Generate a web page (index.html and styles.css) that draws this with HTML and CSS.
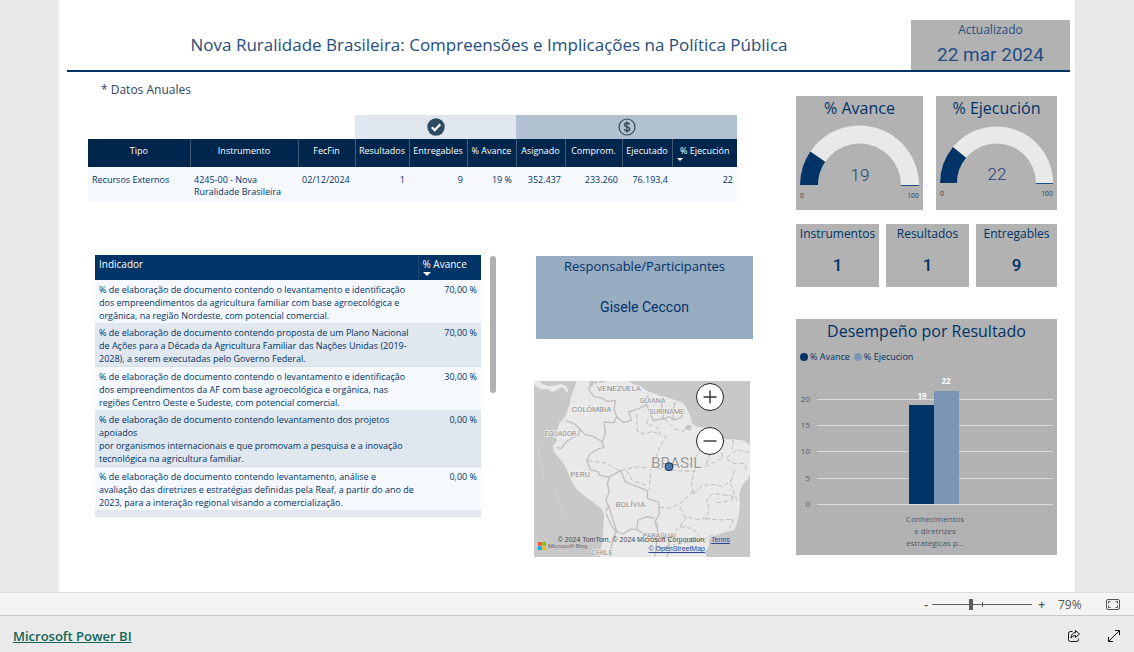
FILE: index.html
```html
<!DOCTYPE html>
<html lang="es">
<head>
<meta charset="utf-8">
<title>Nova Ruralidade Brasileira</title>
<link rel="stylesheet" href="styles.css">
</head>
<body>
<main class="stage">
  <div class="report">
    <header class="report-header">
      <h1 class="report-title">Nova Ruralidade Brasileira: Compreensões e Implicações na Política Pública</h1>
      <div class="updated">
        <span class="updated-label">Actualizado</span>
        <span class="updated-date">22 mar 2024</span>
      </div>
    </header>

    <div class="dashboard">
      <div class="left">
        <p class="note">* Datos Anuales</p>
        <table class="summary">
          <colgroup>
            <col class="c102"><col class="c108"><col class="c57"><col class="c54"><col class="c58">
            <col class="c49"><col class="c49"><col class="c57"><col class="c50"><col class="c65">
          </colgroup>
          <thead>
            <tr class="bands">
              <td colspan="3"></td>
              <td colspan="3" class="band-progress">
                <svg class="band-icon" viewBox="0 0 18 18" aria-hidden="true"><circle cx="9" cy="9" r="8.7" fill="#2c4a62"/><path d="M4.8 9.3l2.9 2.9 5.6-5.9" fill="none" stroke="#fff" stroke-width="2.2"/></svg>
              </td>
              <td colspan="4" class="band-money">
                <svg class="band-icon" viewBox="0 0 18 18" aria-hidden="true"><circle cx="9" cy="9" r="8" fill="none" stroke="#34495a" stroke-width="1.2"/><path d="M11.6 6.6C11.2 5.4 10.2 5 9 5 7.500 5 6.500 5.700 6.500 6.900c0 2.800 5.200 1.300 5.200 4.100 0 1.300-1.200 2-2.700 2-1.500 0-2.500-.6-2.800-1.900M9 3.400v11.200" fill="none" stroke="#34495a" stroke-width="1.4"/></svg>
              </td>
            </tr>
            <tr class="heads">
              <th>Tipo</th><th>Instrumento</th><th>FecFin</th><th>Resultados</th><th>Entregables</th>
              <th>% Avance</th><th>Asignado</th><th>Comprom.</th><th>Ejecutado</th>
              <th class="sorted">% Ejecución</th>
            </tr>
          </thead>
          <tbody>
            <tr>
              <td>Recursos Externos</td><td>4245-00 - Nova Ruralidade Brasileira</td><td>02/12/2024</td>
              <td class="num">1</td><td class="num">9</td><td class="num">19 %</td><td class="num">352.437</td>
              <td class="num">233.260</td><td class="num">76.193,4</td><td class="num">22</td>
            </tr>
          </tbody>
        </table>

        <div class="lower">
          <div class="indicator-panel">
            <div class="indicator-view">
              <table class="indicators">
                <thead><tr><th>Indicador</th><th class="pct sorted">% Avance</th></tr></thead>
                <tbody>
                  <tr><td>% de elaboração de documento contendo o levantamento e identificação<br>dos empreendimentos da agricultura familiar com base agroecológica e<br>orgânica, na região Nordeste, com potencial comercial.</td><td class="num">70,00 %</td></tr>
                  <tr><td>% de elaboração de documento contendo proposta de um Plano Nacional<br>de Ações para a Década da Agricultura Familiar das Nações Unidas (2019-<br>2028), a serem executadas pelo Governo Federal.</td><td class="num">70,00 %</td></tr>
                  <tr><td>% de elaboração de documento contendo o levantamento e identificação<br>dos empreendimentos da AF com base agroecológica e orgânica, nas<br>regiões Centro Oeste e Sudeste, com potencial comercial.</td><td class="num">30,00 %</td></tr>
                  <tr><td>% de elaboração de documento contendo levantamento dos projetos<br>apoiados<br>por organismos internacionais e que promovam a pesquisa e a inovação<br>tecnológica na agricultura familiar.</td><td class="num">0,00 %</td></tr>
                  <tr><td>% de elaboração de documento contendo levantamento, análise e<br>avaliação das diretrizes e estratégias definidas pela Reaf, a partir do ano de<br>2023, para a interação regional visando a comercialização.</td><td class="num">0,00 %</td></tr>
                </tbody>
              </table>
            </div>
            <div class="scroll-thumb"></div>
          </div>

          <div class="middle">
            <section class="owner">
              <h2 class="owner-label">Responsable/Participantes</h2>
              <p class="owner-name">Gisele Ceccon</p>
            </section>
            <section class="map" aria-label="Mapa">
              <svg class="map-art" viewBox="42 33 648 528" preserveAspectRatio="xMidYMid slice">
                <rect x="42" y="33" width="648" height="528" fill="#c8c8c8"/>
                <path fill="#e9e9e9" d="M42 33L58 33 66 42 88 49 108 46 122 42 138 48 146 60 140 70 134 56 122 52 108 62 96 66 82 56 62 58 42 44zM170 33L164 52 158 66 152 84 150 100 142 120 136 138 128 150 118 158 114 176 104 196 112 212 98 228 102 246 116 262 132 282 146 312 158 340 172 360 200 382 226 402 246 418 252 436 250 470 248 510 242 540 240 561L560 561 556 545 566 530 568 508 590 494 618 486 642 480 650 462 656 438 660 402 658 370 666 346 684 326 690 312 690 226 672 212 640 208 614 208 590 194 570 186 554 172 530 170 516 160 512 140 498 112 488 98 464 90 440 82 420 78 402 70 380 64 366 50 350 46 336 42 330 33 262 33 240 40 232 33 220 33 216 50 206 44 210 33z"/>
                <path fill="#c8c8c8" d="M206 33L214 52 222 40 232 44 230 33zM492 176l10-12 16 4-8 14z"/>
                <path fill="#e9e9e9" d="M372 60l12 2-2 14-10 0zM470 158l14-6 10 10-8 10-14-2z"/>
                <g fill="none" stroke="#c2bebe" stroke-width="4" stroke-linejoin="round">
                  <path d="M216 37L206 58 222 80 246 84 262 94 286 92 282 118 290 140 282 158 252 156 256 190 246 218 252 232"/>
                  <path d="M138 152L160 160 180 176 176 194 156 204 136 218 124 236 110 232"/>
                  <path d="M178 176L196 194 222 200 246 216M252 232L232 238 210 252 200 272 212 300 232 304 240 316 268 322 262 342 268 366 258 388 266 410 256 424"/>
                  <path d="M268 320L302 302 316 336 352 350 382 362 382 384 416 398 418 432 404 456 410 470M266 408L276 440 290 484 308 492 330 478 350 478 354 450 380 440 404 444M350 478L372 492 412 508 408 530 424 536 448 526 446 502 414 494 410 458M258 430L276 470 288 486 276 518 270 561"/>
                  <path d="M290 140L312 158 334 150 326 126 356 116 380 104 372 90 386 76M380 104L388 124 400 152 428 146 432 130 424 104 436 88M428 148L448 140 462 150 484 142 494 120M462 150L458 124 466 96M408 532L404 561M444 526L450 540 440 561"/>
                </g>
                <g fill="none" stroke="#bdbdbd" stroke-width="3" stroke-dasharray="14 7" stroke-linejoin="round">
                  <path d="M350 132L352 184 370 192 398 184 422 196 414 172 380 162 386 140M434 146L462 176 492 184 512 162M440 194L420 230 408 260 392 300 388 362M204 272L252 278 300 302 352 290 384 294M320 302L336 330 384 348M392 286L430 300 524 304M550 196L546 232 528 260 524 300 514 340 520 372M520 372L548 346 580 344 610 350 634 330M614 210L600 240 610 262 584 276 556 290 574 240 556 232M620 262L652 240 690 248M620 266L640 280 672 280 680 300M640 208L636 238M418 412L450 414 478 402 504 380 520 362M480 412L494 440 530 448 556 446 568 422 560 390 580 370 648 380M590 398L634 392 640 374M500 440L480 470 462 486 448 516M480 470L520 476 548 510 500 518 460 524M556 446L600 450 640 448 628 476M548 510L580 494M644 300L632 340 650 390"/>
                </g>
                <g fill="none" stroke="#d8d8d8" stroke-width="2"><path d="M52 222L60 270 72 330M104 360L124 408 142 440"/></g>
                <g class="map-names">
                  <text class="wide" x="297" y="62">VENEZUELA</text><text class="wide" x="215" y="125">COLÔMBIA</text>
                  <text x="121" y="197">EQUADOR</text><text class="wide" x="180" y="320">PERU</text>
                  <text class="wide" x="331" y="411">BOLÍVIA</text><text x="398" y="98">GUIANA</text>
                  <text x="440" y="131">SURINAME</text><text x="418" y="505">PARAGUAI</text>
                  <text class="wide" x="246" y="554">CHILE</text><text class="map-country" x="469" y="294">BRASIL</text>
                </g>
                <circle cx="447" cy="290" r="12" fill="#4a78a8" stroke="#16324f" stroke-width="3"/>
                <path fill="#f35325" d="M54 516h11v11H54z"/><path fill="#81bc06" d="M67 516h11v11H67z"/>
                <path fill="#05a6f0" d="M54 529h11v11H54z"/><path fill="#ffba08" d="M67 529h11v11H67z"/>
                <text class="map-bing" x="84" y="534">Microsoft Bing</text>
              </svg>
              <div class="map-zoom">
                <button type="button" aria-label="Acercar"><svg viewBox="0 0 28 28"><path d="M7 14h14M14 7v14"/></svg></button>
                <button type="button" aria-label="Alejar"><svg viewBox="0 0 28 28"><path d="M7 14h14"/></svg></button>
              </div>
              <div class="map-credit">
                <span>© 2024 TomTom, © 2024 Microsoft Corporation,</span>
                <a href="#terms">Terms</a>
                <a class="osm" href="#osm">© OpenStreetMap</a>
              </div>
            </section>
          </div>
        </div>
      </div>

      <aside class="right">
        <div class="gauges">
          <section class="gauge">
            <h2 class="card-title">% Avance</h2>
            <svg viewBox="0 0 127 94">
              <path fill="#e9e9e9" d="M4 69A59.500 59.500 0 0 1 123 69H105A41.500 41.500 0 0 0 22 69z"/>
              <path fill="#003366" d="M4 69A59.500 59.500 0 0 1 14.300 35.600L29.200 45.700A41.500 41.500 0 0 0 22 69z"/>
              <path stroke="#1d4f86" d="M105 69.500h18"/>
              <text class="gauge-value" x="64" y="65">19</text>
              <text class="gauge-end" x="4" y="82">0</text><text class="gauge-end last" x="123" y="82">100</text>
            </svg>
          </section>
          <section class="gauge">
            <h2 class="card-title">% Ejecución</h2>
            <svg viewBox="0 0 121 94">
              <path fill="#e9e9e9" d="M4 67A56.500 56.500 0 0 1 117 67H100A39.500 39.500 0 0 0 21 67z"/>
              <path fill="#003366" d="M4 67A56.500 56.500 0 0 1 17 31L30.100 41.800A39.500 39.500 0 0 0 21 67z"/>
              <path stroke="#1d4f86" d="M100 67.500h17"/>
              <text class="gauge-value" x="61" y="64">22</text>
              <text class="gauge-end" x="4" y="80">0</text><text class="gauge-end last" x="117" y="80">100</text>
            </svg>
          </section>
        </div>

        <div class="counts">
          <section class="count"><h2>Instrumentos</h2><p>1</p></section>
          <section class="count"><h2>Resultados</h2><p>1</p></section>
          <section class="count"><h2>Entregables</h2><p>9</p></section>
        </div>

        <section class="chart">
          <h2 class="card-title">Desempeño por Resultado</h2>
          <div class="legend">
            <span class="key avance">% Avance</span><span class="key ejecucion">% Ejecucion</span>
          </div>
          <svg viewBox="0 0 261 188">
            <path stroke="#dcdcdc" d="M21 31.500H257M21 57.500H257M21 83.500H257M21 110.500H257M21 136.500H257"/>
            <g class="axis"><text x="14" y="34">20</text><text x="14" y="60">15</text><text x="14" y="86">10</text><text x="14" y="113">5</text><text x="14" y="139">0</text></g>
            <path fill="#003366" d="M113 37h25v99h-25z"/><path fill="#7b95b5" d="M138 23h25v113h-25z"/>
            <g class="bar-value"><text x="126" y="31">19</text><text x="150" y="16">22</text></g>
            <g class="category"><text x="139" y="154">Conhecimentos</text><text x="139" y="166">e diretrizes</text><text x="139" y="178">estratégicas p...</text></g>
          </svg>
        </section>
      </aside>
    </div>
  </div>
</main>

<div class="zoom-bar">
  <button type="button" class="step" aria-label="Reducir">-</button>
  <input class="zoom-range" type="range" min="10" max="190" value="79" aria-label="Zoom">
  <button type="button" class="step" aria-label="Ampliar">+</button>
  <span class="zoom-value">79%</span>
  <button type="button" class="fit" aria-label="Ajustar a la página">
    <svg viewBox="0 0 14 11"><rect x=".5" y=".5" width="13" height="10" rx="1.500"/><path d="M2.500 4.500v-2h2M9.500 2.500h2v2M2.500 6.500v2h2M9.500 8.500h2v-2"/></svg>
  </button>
</div>
<footer class="footer">
  <a class="brand" href="#powerbi">Microsoft Power BI</a>
  <button type="button" aria-label="Compartir"><svg viewBox="0 0 14 14"><path d="M5.500 2.500H3.500Q1.500 2.500 1.500 4.500v6Q1.500 12.500 3.500 12.500h6q2 0 2-2V9.500M8.500 1.500l4 3.500-4 3.500V6.500Q5.500 6.500 4 9 4.300 4 8.500 3.500z"/></svg></button>
  <button type="button" aria-label="Pantalla completa"><svg viewBox="0 0 14 14"><path d="M1.500 12.500l11-11M8 1.500h4.500V6M1.500 8v4.500H6"/></svg></button>
</footer>
</body>
</html>
```
FILE: styles.css
```css
* { box-sizing: border-box; }
body {
  margin: 0;
  min-height: 100vh;
  display: flex;
  flex-direction: column;
  background: #eaeaea;
  color: #003366;
  font-family: "Open Sans", "Noto Sans", sans-serif;
}
h1, h2, p { margin: 0; font-weight: 400; }
button { padding: 0; border: 0; background: none; font: inherit; color: inherit; cursor: pointer; }
svg { display: block; }

.stage { flex: 1; display: flex; padding: 0 59px; background: #e9e9e9; }
.report { flex: 1; min-width: 0; padding: 20px 5px 0 8px; background: #fff; }

.report-header { display: flex; align-items: stretch; border-bottom: 2px solid #003366; }
.report-title { flex: 1; align-self: center; text-align: center; font-size: 17px; line-height: 24px; color: #254d7d; }
.updated { width: 159px; height: 50px; display: flex; flex-direction: column; align-items: center; background: #b2b2b2; color: #254d84; }
.updated-label { font-size: 12px; line-height: 20px; }
.updated-date { font: 400 19px/30px Roboto, sans-serif; }

.dashboard { display: grid; grid-template-columns: minmax(0, 1fr) 261px; gap: 44px; padding: 0 13px 0 21px; }
.left { padding-right: 15px; }
.note { padding: 8px 13px 15px; font-size: 12px; line-height: 20px; color: #2c4560; }

table { border-collapse: collapse; table-layout: fixed; width: 100%; }
th { font-weight: 400; color: #fff; }
.num { text-align: right; }
.c102 { width: 102px; } .c108 { width: 108px; } .c57 { width: 57px; } .c54 { width: 54px; }
.c58 { width: 58px; } .c49 { width: 49px; } .c50 { width: 50px; } .c65 { width: 65px; }

.summary { font-size: 9px; line-height: 12px; }
.bands td { height: 24px; padding: 0; }
.band-progress { background: #dfe6ee; }
.band-money { background: #b2c1d1; }
.band-icon { width: 18px; height: 18px; margin: 0 auto; }
.heads th { height: 28px; padding: 0 0 4px; background: #00264d; border-left: 1px solid #3f5b79; white-space: nowrap; }
.heads th:first-child { border-left: 0; }
.sorted { position: relative; }
.sorted::after { content: ""; position: absolute; left: 4px; bottom: 6px; border: 3px solid transparent; border-top-color: #fff; border-bottom: 0; }
.summary tbody td { height: 35px; padding: 7px 4px 3px; vertical-align: top; background: #f5f9fe; }

.lower { display: grid; grid-template-columns: minmax(0, 401px) minmax(0, 219px); justify-content: space-between; padding: 53px 0 0 7px; margin-right: -16px; }
.indicator-panel { display: flex; gap: 9px; align-items: flex-start; }
.indicator-view { flex: 1; height: 262px; overflow: hidden; background: #e0e7ef; }
.indicators { font-size: 9px; line-height: 13px; }
.indicators th { height: 25px; padding: 3px 4px 0; text-align: left; vertical-align: top; background: #003366; font-size: 10px; line-height: 13px; }
.indicators .pct { width: 63px; border-left: 1px solid #1c4a79; }
.indicators td { padding: 3px 4px 1px; vertical-align: top; white-space: nowrap; background: #f5f9fe; }
.indicators tr:nth-child(even) td { background: #e0e7ef; border-bottom: 1px solid #d5dde7; }
.indicators .sorted::after { border-width: 4px 4px 0; bottom: 4px; }
.scroll-thumb { width: 6px; height: 137px; margin-top: 1px; border-radius: 3px; background: #b0b0b0; }

.middle { display: flex; flex-direction: column; gap: 42px; padding-top: 1px; }
.owner { height: 83px; margin-left: 2px; background: #98acc2; text-align: center; }
.owner-label { font-size: 13px; line-height: 20px; }
.owner-name { padding-top: 21px; font: 400 14px/20px Roboto, sans-serif; }
.map { position: relative; height: 176px; margin-right: 3px; overflow: hidden; }
.map-art { width: 100%; height: 100%; }
.map-names { font: 21px Roboto, sans-serif; fill: #8c8c8c; text-anchor: middle; stroke: #f1f1f1; stroke-width: 4px; paint-order: stroke; }
.map-names .wide { font-size: 24px; }
.map-names .map-country { font-size: 46px; fill: #999; }
.map-bing { font: 500 18px Roboto, sans-serif; fill: #7c7c7c; }
.map-zoom { position: absolute; top: 2px; right: 26px; display: grid; gap: 16px; }
.map-zoom button { width: 28px; height: 28px; border: 1px solid #222; border-radius: 50%; background: #fff; }
.map-zoom svg { width: 26px; fill: none; stroke: #333; stroke-width: 1.5; }
.map-credit { position: absolute; right: 20px; bottom: 4px; text-align: right; font: 7px/9px "Liberation Sans", sans-serif; color: #444; white-space: nowrap; }
.map-credit a { color: #2a4694; margin-left: 3px; }
.map-credit .osm { display: block; margin-right: 25px; }

.right { padding-top: 24px; }
.card-title { text-align: center; font-size: 16px; line-height: 24px; }
.gauges { display: grid; grid-template-columns: 127fr 121fr; gap: 13px; }
.gauge { height: 114px; background: #b2b2b2; overflow: hidden; }
.gauge .card-title { margin-bottom: -4px; }
.gauge svg { width: 100%; }
.gauge-value { font: 300 17px Roboto, sans-serif; fill: #1d4373; text-anchor: middle; }
.gauge-end { font: 7px Roboto, sans-serif; fill: #3a4c60; }
.gauge-end.last { text-anchor: end; }

.counts { display: grid; grid-template-columns: 83fr 83fr 81fr; gap: 7px; padding: 14px 0 32px; }
.count { height: 63px; background: #b2b2b2; text-align: center; }
.count h2 { font-size: 12px; line-height: 19px; }
.count p { padding-top: 11px; font: 500 17px/22px Roboto, sans-serif; }

.chart { height: 236px; background: #b2b2b2; overflow: hidden; }
.legend { display: flex; gap: 4px; padding: 7px 4px 4px; font-size: 9px; line-height: 14px; }
.key { display: flex; align-items: center; gap: 2px; }
.key::before { content: ""; width: 8px; height: 8px; border-radius: 50%; background: #003366; }
.key.ejecucion::before { background: #7b95b5; }
.axis, .category { font-size: 8px; fill: #46596e; }
.axis { text-anchor: end; }
.category, .bar-value { text-anchor: middle; }
.bar-value { font-size: 8px; font-weight: 700; fill: #fff; }

.zoom-bar { display: flex; align-items: center; justify-content: flex-end; height: 24px; padding-right: 14px; background: #f4f4f4; border-top: 1px solid #ddd; border-bottom: 1px solid #c8c8c8; font-size: 12px; color: #555; }
.step { font-weight: 600; }
.zoom-range { -webkit-appearance: none; appearance: none; width: 100px; height: 11px; margin: 0 6px 0 4px; background: linear-gradient(#605e5c, #605e5c) 0 5px / 100% 1px no-repeat, linear-gradient(#605e5c, #605e5c) 50px 3px / 1px 5px no-repeat; }
.zoom-range::-webkit-slider-thumb { -webkit-appearance: none; width: 4px; height: 11px; background: #605e5c; }
.zoom-value { width: 23px; margin: 0 25px 0 13px; }
.fit svg { width: 14px; height: 11px; fill: none; stroke: #555; }
.footer { display: flex; align-items: center; gap: 26px; height: 36px; padding: 4px 13px 0; background: #eaeaea; }
.brand { margin-right: auto; font-size: 13px; font-weight: 600; color: #0f6456; }
.footer svg { width: 14px; height: 14px; fill: none; stroke: #111; }
```
